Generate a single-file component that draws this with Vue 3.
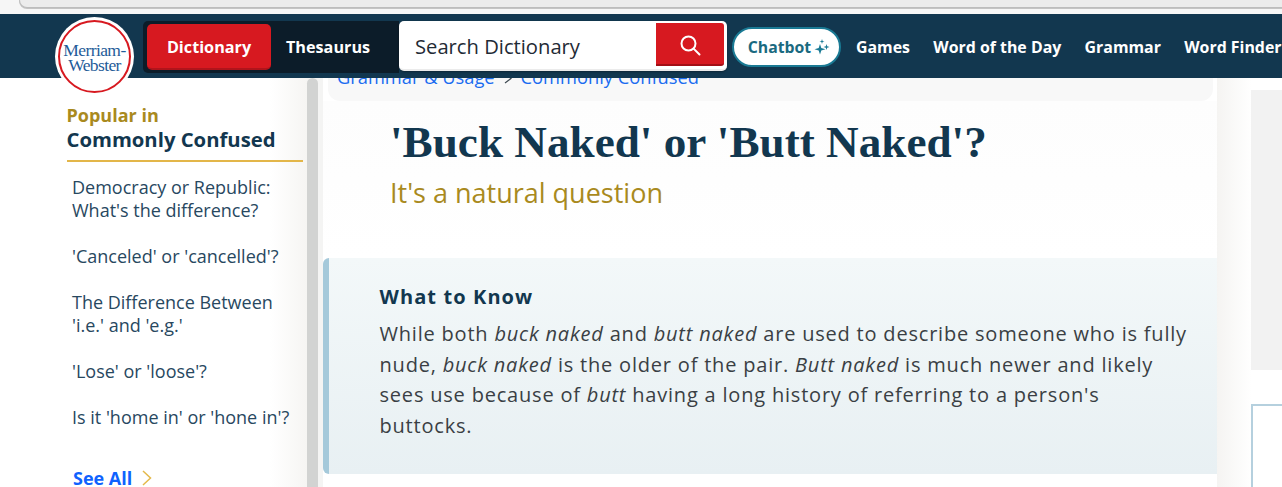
<template>
  <div class="page">
    <div class="browser-strip">
      <div class="address-bar"></div>
    </div>

    <header class="site-header">
      <div class="logo">
        <div class="logo-ring">
          <span>Merriam-</span>
          <span>Webster</span>
        </div>
      </div>
      <div class="search-group">
        <div class="tabs">
          <a class="tab active">Dictionary</a>
          <a class="tab">Thesaurus</a>
        </div>
        <div class="search-box">
          <span class="search-text">Search Dictionary</span>
          <button class="search-btn" aria-label="Search">
            <svg width="22" height="22" viewBox="0 0 22 22" fill="none" stroke="#fff" stroke-width="2">
              <circle cx="9.5" cy="9.5" r="7" />
              <path d="M14.6 14.6 L20.5 20.5" stroke-linecap="round" />
            </svg>
          </button>
        </div>
      </div>
      <a class="chatbot">
        Chatbot
        <svg width="16" height="16" viewBox="0 0 16 16" fill="#1a7a94">
          <path d="M6 5 L7.3 9 L11.5 10.2 L7.3 11.4 L6 15.5 L4.7 11.4 L0.5 10.2 L4.7 9 Z" />
          <path d="M12.5 5 L13.2 7.2 L15.5 8 L13.2 8.8 L12.5 11 L11.8 8.8 L9.5 8 L11.8 7.2 Z" />
          <path d="M8 0 L8.6 1.9 L10.5 2.5 L8.6 3.1 L8 5 L7.4 3.1 L5.5 2.5 L7.4 1.9 Z" />
        </svg>
      </a>
      <nav class="main-nav">
        <a v-for="link in navLinks" :key="link">{{ link }}</a>
      </nav>
    </header>

    <div class="columns">
      <aside class="sidebar">
        <div class="side-title">
          <span class="side-kicker">Popular in</span>
          <span class="side-name">Commonly Confused</span>
        </div>
        <ul class="side-list">
          <li v-for="item in popular" :key="item">{{ item }}</li>
        </ul>
        <a class="see-all">
          See All
          <svg width="10" height="16" viewBox="0 0 10 16" fill="none" stroke="#e4b94a" stroke-width="1.5">
            <path d="M1 1 L8.5 8 L1 15" />
          </svg>
        </a>
      </aside>

      <div class="gutter">
        <div class="gutter-bar"></div>
      </div>

      <main class="article">
        <div class="breadcrumb">
          <a>Grammar &amp; Usage</a>
          <svg width="10" height="11" viewBox="0 0 10 11" fill="none" stroke="#3f4a52" stroke-width="1.2">
            <path d="M2 1 L8 5.5 L2 10" />
          </svg>
          <a>Commonly Confused</a>
        </div>
        <div class="headline">
          <h1>'Buck Naked' or 'Butt Naked'?</h1>
          <p class="subtitle">It's a natural question</p>
        </div>
        <section class="know">
          <h2>What to Know</h2>
          <p>
            While both <em>buck naked</em> and <em>butt naked</em> are used to describe someone who is fully
            nude, <em>buck naked</em> is the older of the pair. <em>Butt naked</em> is much newer and likely
            sees use because of <em>butt</em> having a long history of referring to a person's
            buttocks.
          </p>
        </section>
      </main>

      <aside class="right-rail">
        <div class="ad-block"></div>
        <div class="ad-frame"></div>
      </aside>
    </div>
  </div>
</template>

<script setup>
const navLinks = ['Games', 'Word of the Day', 'Grammar', 'Word Finder']

const popular = [
  "Democracy or Republic: What's the difference?",
  "'Canceled' or 'cancelled'?",
  "The Difference Between 'i.e.' and 'e.g.'",
  "'Lose' or 'loose'?",
  "Is it 'home in' or 'hone in'?"
]
</script>

<style>
html, body {
  margin: 0;
  overflow: hidden;
  background: #fff;
}
</style>

<style scoped>
.page {
  width: 1282px;
  height: 487px;
  overflow: hidden;
  font-family: "Open Sans", "Noto Sans", sans-serif;
  color: #12374f;
}

.browser-strip {
  height: 14px;
  background: #f6f6f6;
  box-sizing: border-box;
  padding-left: 19px;
}

.address-bar {
  height: 7px;
  background: #ececec;
  border: 1px solid #bdbdbd;
  border-top: 0;
  border-right: 0;
  border-bottom-left-radius: 10px;
  box-shadow: 0 1px 0 #c4c4c4;
}

.site-header {
  position: relative;
  z-index: 2;
  height: 64px;
  background: #12374f;
  display: flex;
  align-items: flex-start;
  padding-left: 55px;
}

.logo {
  width: 79px;
  height: 79px;
  margin-top: 3px;
  flex: none;
  border-radius: 50%;
  background: #fff;
  box-sizing: border-box;
  padding: 3px;
}

.logo-ring {
  height: 100%;
  box-sizing: border-box;
  border: 2px solid #d71920;
  border-radius: 50%;
  display: flex;
  flex-direction: column;
  align-items: center;
  justify-content: center;
  font-family: "Liberation Serif", serif;
  font-size: 17.5px;
  line-height: 15px;
  letter-spacing: -0.6px;
  color: #1f5c99;
  padding-top: 2px;
}

.search-group {
  display: flex;
  flex: none;
  margin: 7px 0 0 9px;
  height: 52px;
}

.tabs {
  display: flex;
  align-items: flex-start;
  background: #0c1c29;
  border-radius: 5px 0 0 5px;
  width: 256px;
  height: 52px;
  box-sizing: border-box;
  padding: 3px 0 0 4px;
}

.tab {
  font-size: 16.2px;
  font-weight: 700;
  color: #fff;
  height: 46px;
  line-height: 46px;
  box-sizing: border-box;
  text-align: center;
}

.tab.active {
  width: 124px;
  background: #d71920;
  border-radius: 5px;
  border-bottom: 2px solid #b0141b;
  margin-right: 15px;
}

.search-box {
  display: flex;
  width: 328px;
  height: 50px;
  background: #fff;
  border-radius: 5px;
  box-sizing: border-box;
  padding: 2px 3px 3px 0;
  border-bottom: 2px solid #ebebeb;
  box-shadow: 0 1px 2px rgba(0, 0, 0, 0.3);
}

.search-text {
  flex: 1;
  padding-left: 16px;
  font-size: 20.2px;
  line-height: 46px;
  color: #1f2b36;
}

.search-btn {
  width: 68px;
  background: #d71920;
  border: 0;
  border-bottom: 2px solid #a30f15;
  border-radius: 0 3px 3px 0;
  padding: 3px 0 0;
  display: flex;
  align-items: center;
  justify-content: center;
}

.chatbot {
  display: flex;
  flex: none;
  align-items: center;
  justify-content: center;
  gap: 3px;
  box-sizing: border-box;
  width: 109px;
  height: 40px;
  margin: 13px 0 0 5px;
  padding-left: 5px;
  background: #fff;
  border: 2px solid #1a7a94;
  border-radius: 20px;
  font-size: 15.8px;
  font-weight: 700;
  color: #1a6a80;
}

.main-nav {
  display: flex;
  flex: none;
  gap: 23.3px;
  margin-left: 15px;
  height: 64px;
  align-items: center;
  padding-top: 2px;
  box-sizing: border-box;
  white-space: nowrap;
}

.main-nav a {
  font-size: 15.9px;
  font-weight: 700;
  color: #fff;
}

.columns {
  display: flex;
  height: 409px;
}

.sidebar {
  width: 307px;
  flex: none;
  box-sizing: border-box;
  padding: 26px 4px 0 0;
  background: linear-gradient(90deg, #fff 0, #fff 270px, #f6f5f3 307px);
}

.side-title {
  display: flex;
  flex-direction: column;
  margin-left: 66.5px;
  padding-bottom: 7px;
  border-bottom: 2px solid #e3b649;
}

.side-kicker {
  font-size: 18px;
  font-weight: 700;
  line-height: 22px;
  color: #a98a1e;
}

.side-name {
  font-size: 20.3px;
  font-weight: 700;
  line-height: 27px;
  color: #12374f;
}

.side-list {
  list-style: none;
  margin: 14px 0 0;
  padding: 0 12px 0 72px;
  font-size: 18px;
  line-height: 23px;
  color: #28485f;
}

.side-list li {
  margin-bottom: 23px;
}

.see-all {
  display: flex;
  align-items: center;
  gap: 10px;
  margin: 37px 0 0 73px;
  font-size: 18px;
  font-weight: 700;
  line-height: 24px;
  color: #0f62fe;
}

.gutter {
  width: 16px;
  flex: none;
  background: #f4f4f3;
}

.gutter-bar {
  width: 11px;
  height: 100%;
  background: #d2d3d2;
  border-radius: 6px 6px 0 0;
}

.article {
  width: 894px;
  flex: none;
  background: #fff;
}

.breadcrumb {
  display: flex;
  align-items: flex-start;
  gap: 8px;
  height: 36px;
  margin: -13px 4px 0 5px;
  padding: 0 0 0 9px;
  background: #f8f8f8;
  border-radius: 0 0 12px 12px;
  font-size: 18.3px;
  color: #1a6cf0;
  line-height: 24px;
}

.breadcrumb svg {
  margin-top: 8px;
}

.headline {
  height: 157px;
  box-sizing: border-box;
  padding: 19px 0 0 67px;
  background: linear-gradient(#fdfdfd, #fff);
}

h1 {
  margin: 0;
  font-family: "Liberation Serif", serif;
  font-size: 45.2px;
  font-weight: 700;
  line-height: 44px;
  color: #12374f;
  white-space: nowrap;
}

.subtitle {
  margin: 11px 0 0;
  font-size: 27px;
  line-height: 36px;
  color: #a98a1e;
}

.know {
  box-sizing: border-box;
  height: 216px;
  padding: 25px 20px 0 50.5px;
  border-left: 6px solid #a5c9da;
  border-radius: 6px 0 0 6px;
  background: linear-gradient(#f3f8f9, #e8f0f3);
}

h2 {
  margin: 0;
  font-size: 20px;
  font-weight: 700;
  letter-spacing: 1.1px;
  line-height: 27px;
  color: #12374f;
}

.know p {
  margin: 9px 0 0;
  font-size: 20px;
  line-height: 30.6px;
  letter-spacing: 0.8px;
  color: #3a3f44;
}

.right-rail {
  flex: 1;
  margin-left: 0;
  padding: 12px 0 0 34px;
  background: linear-gradient(90deg, #f5f4f2, #fff 35px);
}

.ad-block {
  height: 280px;
  background: #f2f2f2;
}

.ad-frame {
  height: 100px;
  margin-top: 34px;
  border: 2px solid #b5d0de;
  border-right: 0;
  border-bottom: 0;
  background: #fff;
}
</style>
